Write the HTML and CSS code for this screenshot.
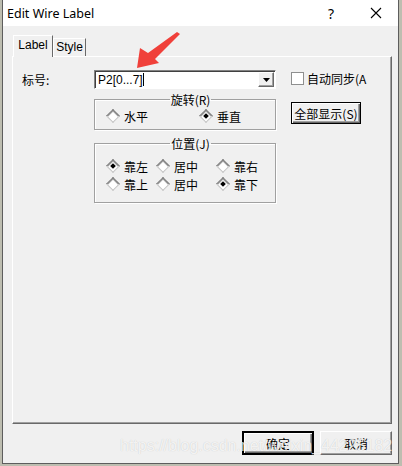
FILE: index.html
```html
<!DOCTYPE html>
<html lang="zh-CN">
<head>
    <meta charset="UTF-8">
    <title>Edit Wire Label</title>
    <link rel="stylesheet" href="styles.css">
</head>
<body>
    <div class="window">
        <div class="titlebar">
            <span class="title">Edit Wire Label</span>
            <span class="help">?</span>
            <span class="close">
                <svg width="12" height="12" viewBox="0 0 12 12"><path d="M1 1 L11 11 M11 1 L1 11" stroke="#000" stroke-width="1.1" fill="none"/></svg>
            </span>
        </div>

        <div class="client">
            <div class="tabs">
                <div class="tab active">Label</div>
                <div class="tab">Style</div>
            </div>

            <div class="panel">
                <div class="col-label">标号:</div>

                <div class="col-main">
                    <div class="combo">
                        <span class="combo-text">P2[0...7]<span class="caret"></span></span>
                        <span class="drop">
                            <svg width="7" height="4" viewBox="0 0 7 4"><path d="M0 0 H7 L3.5 4 Z" fill="#000"/></svg>
                        </span>
                    </div>

                    <fieldset class="group rotate">
                        <legend>旋转(R)</legend>
                        <div class="radios">
                            <span class="radio"><span class="dot"></span>水平</span>
                            <span class="radio checked"><span class="dot"></span>垂直</span>
                        </div>
                    </fieldset>

                    <fieldset class="group position">
                        <legend>位置(J)</legend>
                        <div class="radios">
                            <span class="radio checked"><span class="dot"></span>靠左</span>
                            <span class="radio"><span class="dot"></span>居中</span>
                            <span class="radio"><span class="dot"></span>靠右</span>
                            <span class="radio"><span class="dot"></span>靠上</span>
                            <span class="radio"><span class="dot"></span>居中</span>
                            <span class="radio checked"><span class="dot"></span>靠下</span>
                        </div>
                    </fieldset>
                </div>

                <div class="col-side">
                    <label class="check"><span class="box"></span><span>自动同步(A</span></label>
                    <button class="btn focus">全部显示(S)</button>
                </div>
            </div>

            <div class="actions">
                <button class="btn default">确定</button>
                <button class="btn">取消</button>
            </div>
        </div>
    </div>

    <svg class="arrow" width="402" height="466" viewBox="0 0 402 466">
        <polygon points="137,68 140,48 148,53 177,32 180,34 155,59 159,63" fill="#f0403a"/>
    </svg>
    <div class="watermark">https://blog.csdn.net/weixin_44225182</div>
</body>
</html>
```

FILE: styles.css
```css
body {
    margin: 0;
    width: 402px;
    height: 466px;
    overflow: hidden;
    position: relative;
    background: #bdbdb0;
    font-family: "Noto Sans CJK SC", "Liberation Sans", sans-serif;
    font-size: 12px;
    color: #000;
}
.window {
    margin-left: 2px;
    width: 397px;
    height: 464px;
    box-sizing: border-box;
    border: 1px solid #5d5d5d;
    border-top: 0;
    background: #f0f0f0;
    display: flex;
    flex-direction: column;
}
.titlebar {
    height: 26px;
    background: #fff;
    display: flex;
    align-items: center;
    padding-left: 4px;
}
.title {
    flex: 1;
    font-family: "Noto Sans", sans-serif;
    font-size: 12.5px;
}
.help {
    width: 46px;
    text-align: center;
    font-family: "Noto Sans", sans-serif;
    font-size: 14px;
}
.close {
    width: 44px;
    display: flex;
    justify-content: center;
}
.client {
    flex: 1;
    padding: 9px 6px 0 9px;
    display: flex;
    flex-direction: column;
}
.tabs {
    display: flex;
    align-items: flex-end;
    height: 21px;
    margin-left: 1px;
}
.tab {
    box-sizing: border-box;
    height: 18px;
    width: 33px;
    border: 1px solid;
    border-color: #fff #696969 transparent #fff;
    border-bottom: 0;
    font-family: "Liberation Sans", sans-serif;
    font-size: 12px;
    line-height: 17px;
    text-align: center;
}
.tab.active {
    position: relative;
    z-index: 1;
    width: 40px;
    height: 22px;
    margin-bottom: -1px;
    line-height: 19px;
    background: #f0f0f0;
}
.panel {
    box-sizing: border-box;
    width: 380px;
    height: 368px;
    border: 1px solid;
    border-color: #fff #696969 #696969 #fff;
    box-shadow: inset -1px -1px 0 #a0a0a0;
    padding: 13px 0 0 9px;
    display: flex;
    overflow: hidden;
}
.col-label {
    width: 72px;
    line-height: 19px;
}
.col-main {
    width: 182px;
    display: flex;
    flex-direction: column;
}
.combo {
    box-sizing: border-box;
    height: 19px;
    border: 1px solid;
    border-color: #828282 #fff #fff #828282;
    box-shadow: inset 1px 1px 0 #404040;
    background: #fff;
    display: flex;
    align-items: center;
    padding: 0 1px 0 3px;
}
.combo-text {
    flex: 1;
    font-family: "Liberation Sans", sans-serif;
    font-size: 12px;
    display: flex;
    align-items: center;
}
.caret {
    width: 1px;
    height: 13px;
    background: #000;
}
.drop {
    box-sizing: border-box;
    width: 16px;
    height: 15px;
    border: 1px solid;
    border-color: #fff #696969 #696969 #fff;
    box-shadow: inset -1px -1px 0 #a0a0a0;
    background: #f0f0f0;
    display: flex;
    align-items: center;
    justify-content: center;
}
.group {
    margin: 4px 0 0;
    border: 1px solid #a0a0a0;
    box-shadow: inset 1px 1px 0 #fff, 1px 1px 0 #fff;
    padding: 3px 0 6px 11px;
    min-width: 0;
}
.group legend {
    margin: 0 auto;
    padding: 0 1px;
    line-height: 13px;
}
.group.position {
    margin-top: 7px;
    padding: 9px 0 11px 11px;
}
.radios {
    display: grid;
    row-gap: 4px;
}
.rotate .radios {
    grid-template-columns: 93px auto;
}
.position .radios {
    grid-template-columns: 50px 60px auto;
}
.radio {
    display: flex;
    align-items: center;
    gap: 4px;
    height: 14px;
}
.dot {
    width: 8px;
    height: 8px;
    margin: 0 2px;
    transform: rotate(45deg);
    background: #fff;
    border: 1px solid;
    border-color: #6e6e6e #c2c2c2 #c2c2c2 #6e6e6e;
    box-shadow: inset 1px 1px 0 #a0a0a0;
    display: flex;
    align-items: center;
    justify-content: center;
}
.radio.checked .dot::after {
    content: "";
    width: 4px;
    height: 4px;
    background: #000;
}
.col-side {
    margin-left: 15px;
    display: flex;
    flex-direction: column;
    align-items: flex-start;
}
.check {
    display: flex;
    align-items: center;
    gap: 3px;
    height: 15px;
    margin-top: 1px;
    white-space: nowrap;
}
.box {
    box-sizing: border-box;
    width: 13px;
    height: 13px;
    border: 1px solid #8e8f8f;
    background: #fff;
}
.btn {
    box-sizing: border-box;
    font-family: "Noto Sans CJK SC", sans-serif;
    font-size: 12px;
    padding: 0;
    background: #f0f0f0;
    border: 1px solid;
    border-color: #fff #696969 #696969 #fff;
    box-shadow: inset -1px -1px 0 #a0a0a0;
    color: #000;
}
.col-side .btn {
    width: 70px;
    height: 22px;
    margin-top: 16px;
}
.btn.focus,
.btn.default {
    border-color: #000;
    box-shadow: inset 1px 1px 0 #fff, inset -1px -1px 0 #696969, inset -2px -2px 0 #a0a0a0;
}
.actions {
    display: flex;
    justify-content: flex-end;
    gap: 6px;
    margin-top: 7px;
}
.actions .btn {
    width: 72px;
    height: 24px;
}
.btn.default {
    border-width: 2px;
}
.arrow {
    position: absolute;
    left: 0;
    top: 0;
    pointer-events: none;
}
.watermark {
    position: absolute;
    left: 120px;
    top: 437px;
    font-family: "Liberation Sans", sans-serif;
    font-size: 16px;
    color: rgba(255, 255, 255, 0.8);
    text-shadow: 0 0 1px rgba(0, 0, 0, 0.2);
    white-space: nowrap;
    pointer-events: none;
}
```
